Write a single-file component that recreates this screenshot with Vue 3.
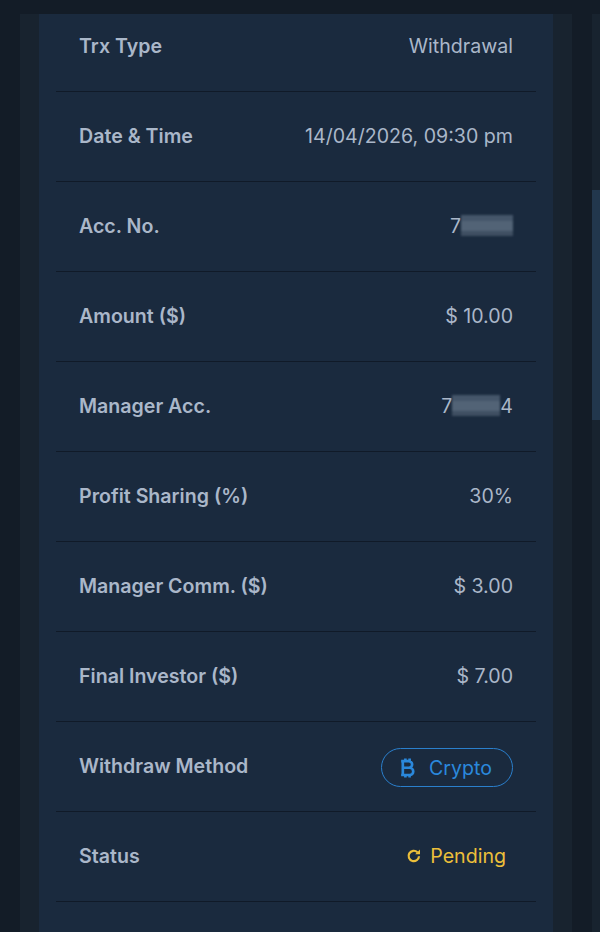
<template>
  <div class="page">
    <div class="outer">
      <div class="inner">
        <div class="list">
          <div v-for="row in rows" :key="row.label" class="row">
            <div class="label">{{ row.label }}</div>

            <div v-if="row.type === 'mask'" class="value masked">
              <span>{{ row.start }}</span>
              <i class="mask" :style="{ width: row.maskWidth + 'px' }"></i>
              <span v-if="row.end">{{ row.end }}</span>
            </div>

            <div v-else-if="row.type === 'method'" class="method">
              <svg class="btc" viewBox="0 0 16 20" width="17" height="22" fill="none" stroke="currentColor" stroke-width="2.5">
                <path d="M2 3.5h7.2a3.1 3.1 0 0 1 0 6.3H3.6M3.6 9.8h6.4a3.4 3.4 0 0 1 0 6.8H2M3.6 3.5v13.1M6 1v2.5M10 1v2.5M6 16.6v2.4M10 16.6v2.4" />
              </svg>
              <span>{{ row.value }}</span>
            </div>

            <div v-else-if="row.type === 'status'" class="status">
              <svg viewBox="0 0 16 16" width="16" height="16" fill="none" stroke="currentColor" stroke-width="2.2">
                <path d="M13 8.2A5.2 5.2 0 1 1 11.4 4.2" />
                <path d="M14 1.4v4.8H9.2z" fill="currentColor" stroke="none" />
              </svg>
              <span>{{ row.value }}</span>
            </div>

            <div v-else class="value">{{ row.value }}</div>
          </div>
        </div>
      </div>
    </div>
    <div class="scrollbar"><div class="thumb"></div></div>
  </div>
</template>

<script setup>
const rows = [
  { label: 'Trx Type', value: 'Withdrawal' },
  { label: 'Date & Time', value: '14/04/2026, 09:30 pm' },
  { label: 'Acc. No.', type: 'mask', start: '7', maskWidth: 52 },
  { label: 'Amount ($)', value: '$ 10.00' },
  { label: 'Manager Acc.', type: 'mask', start: '7', end: '4', maskWidth: 48 },
  { label: 'Profit Sharing (%)', value: '30%' },
  { label: 'Manager Comm. ($)', value: '$ 3.00' },
  { label: 'Final Investor ($)', value: '$ 7.00' },
  { label: 'Withdraw Method', type: 'method', value: 'Crypto' },
  { label: 'Status', type: 'status', value: 'Pending' },
  { label: '', value: '' }
]
</script>

<style>
body {
  background: #131c27;
}
</style>

<style scoped>
.page {
  position: relative;
  height: 932px;
  overflow: hidden;
  background: #131c27;
  font-family: Inter, "Liberation Sans", sans-serif;
  padding: 14px 28px 0 20px;
  box-sizing: border-box;
}

.outer {
  height: 100%;
  background: #18232f;
  padding: 0 19px;
}

.inner {
  height: 100%;
  overflow: hidden;
  background: #1a2a3e;
  padding: 0 17px;
}

.list {
  margin-top: -12px;
}

.row {
  display: flex;
  align-items: center;
  justify-content: space-between;
  height: 90px;
  padding: 0 23px 2px;
  box-sizing: border-box;
  border-bottom: 1px solid #101a28;
}

.label {
  font-size: 19.6px;
  font-weight: 600;
  color: #aab7c9;
}

.value {
  font-size: 19.6px;
  color: #aab7c9;
}

.masked {
  display: flex;
  align-items: center;
}

.mask {
  display: block;
  height: 21px;
  background: linear-gradient(180deg, #45566a 0 30%, #526376 30% 78%, #3f4f62 78%);
  filter: blur(1px);
}

.method {
  display: flex;
  align-items: center;
  gap: 13px;
  height: 39px;
  margin-top: 4px;
  padding: 0 20px 0 17px;
  box-sizing: border-box;
  border: 1.6px solid #2a7fcc;
  border-radius: 20px;
  font-size: 19.6px;
  color: #2a88dc;
}

.status {
  display: flex;
  align-items: center;
  gap: 8px;
  padding-right: 7px;
  font-size: 19.6px;
  color: #ecbf3a;
}

.scrollbar {
  position: absolute;
  top: 14px;
  right: 0;
  bottom: 0;
  width: 8px;
  background: #18232f;
}

.thumb {
  margin-top: 176px;
  height: 230px;
  background: #22374d;
}
</style>
